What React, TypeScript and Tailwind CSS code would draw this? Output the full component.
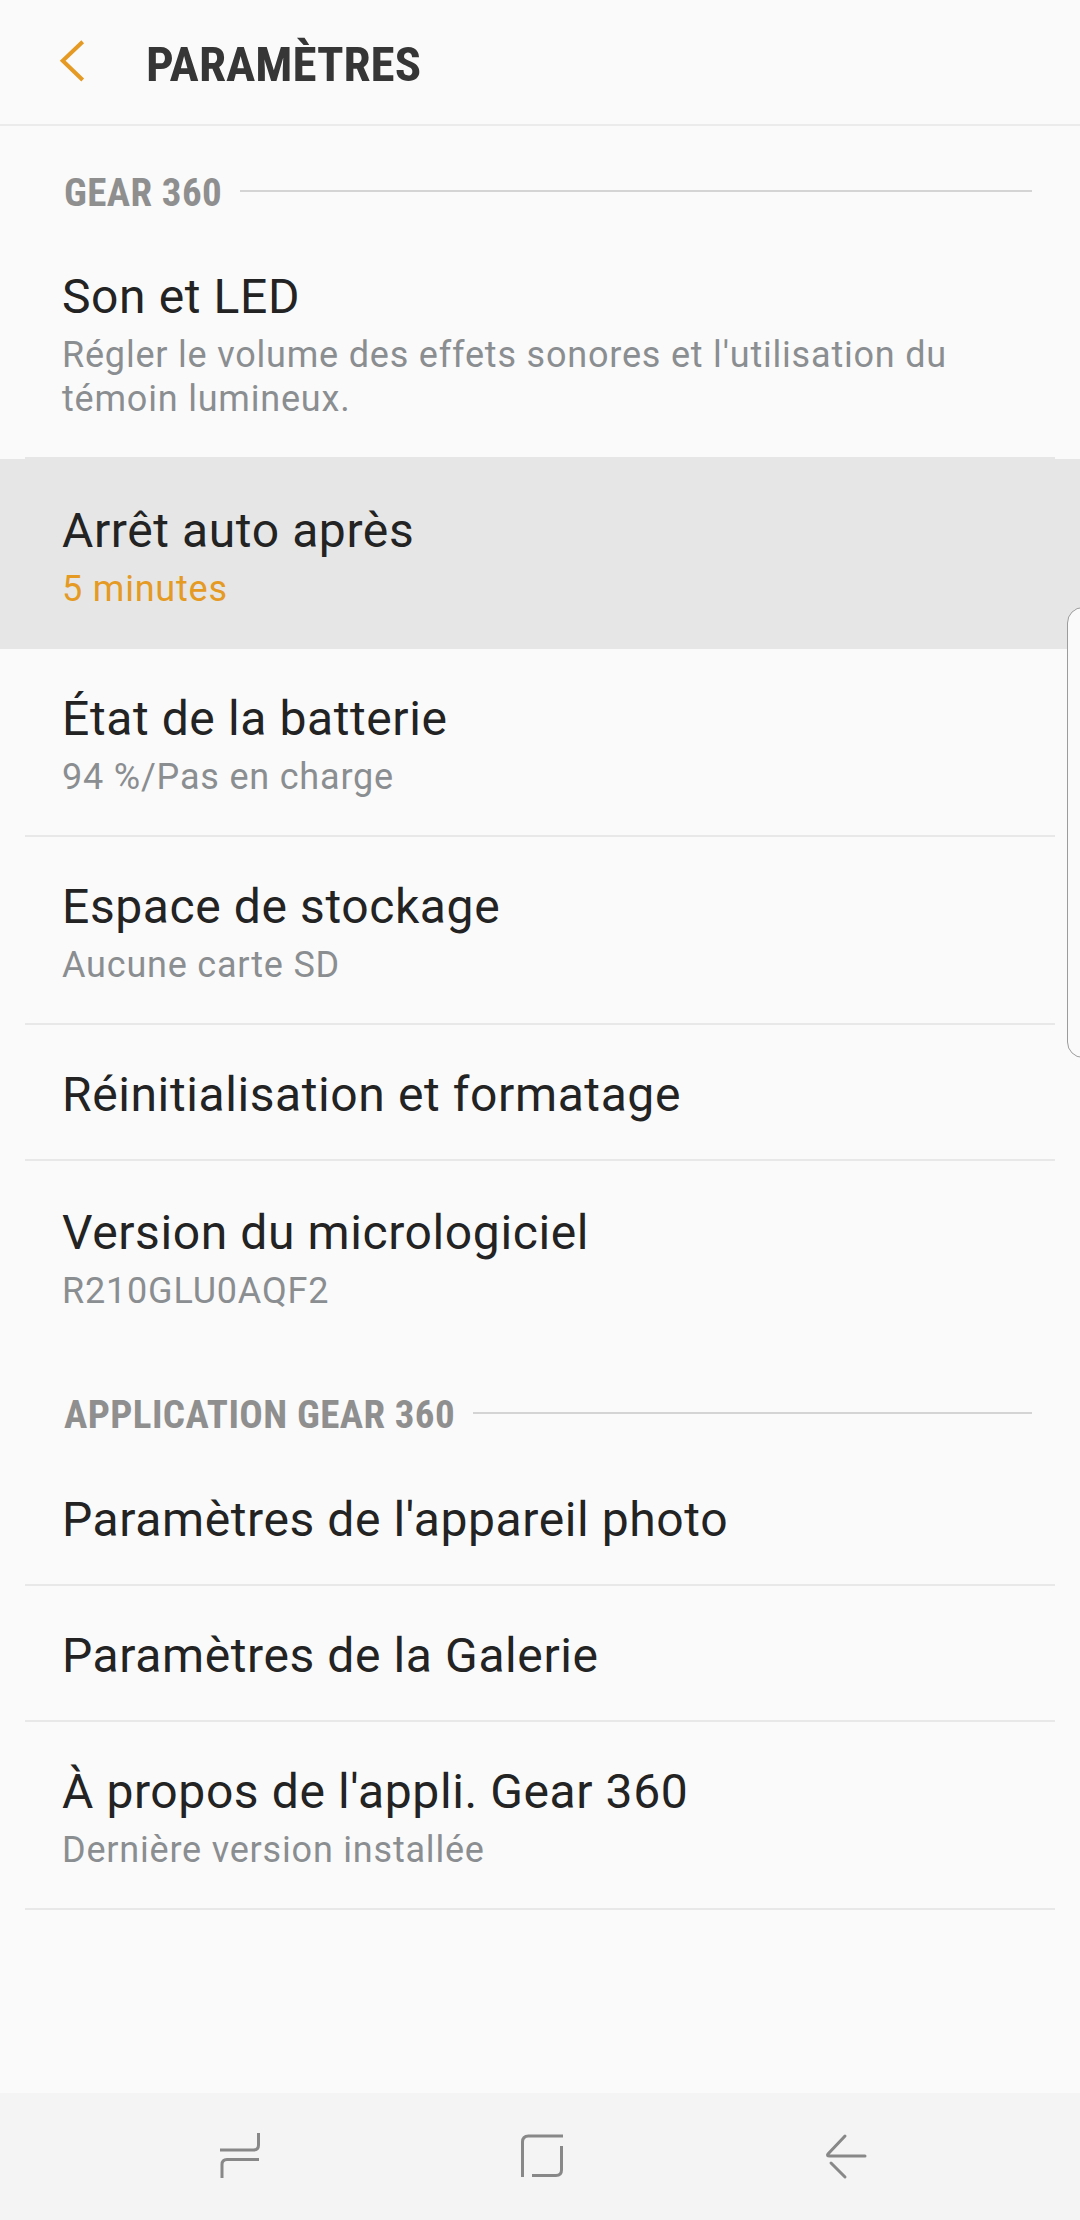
import React from "react";

const condensed = {
  fontFamily: '"Roboto Condensed", "Liberation Sans Narrow", "DejaVu Sans Condensed", Roboto, sans-serif',
};

type Item = {
  title: string;
  sub?: string[];
  accent?: boolean;
  active?: boolean;
};

const gear: Item[] = [
  {
    title: "Son et LED",
    sub: ["Régler le volume des effets sonores et l'utilisation du", "témoin lumineux."],
  },
  { title: "Arrêt auto après", sub: ["5 minutes"], accent: true, active: true },
  { title: "État de la batterie", sub: ["94 %/Pas en charge"] },
  { title: "Espace de stockage", sub: ["Aucune carte SD"] },
  { title: "Réinitialisation et formatage" },
];

const app: Item[] = [
  { title: "Paramètres de l'appareil photo" },
  { title: "Paramètres de la Galerie" },
  { title: "À propos de l'appli. Gear 360", sub: ["Dernière version installée"] },
];

function SectionHeader({ label, height }: { label: string; height: string }) {
  return (
    <div className={`flex items-start pl-[64px] pr-[48px] pt-[44px] ${height}`}>
      <span
        className="text-[39px] leading-[46px] font-bold tracking-[0.4px] text-[#8f8f8f] font-stretch-condensed whitespace-nowrap"
        style={condensed}
      >
        {label}
      </span>
      <div className="ml-[18px] mt-[20px] h-[2px] flex-1 bg-[#d4d4d4]" />
    </div>
  );
}

function Title({ children }: { children: React.ReactNode }) {
  return <div className="text-[48px] leading-[56px] tracking-[0.6px] text-[#232323]">{children}</div>;
}

function Sub({ children, accent }: { children: React.ReactNode; accent?: boolean }) {
  return (
    <div
      className={`mt-[8px] text-[36px] leading-[44px] tracking-[0.8px] ${
        accent ? "text-[#e59a24]" : "text-[#8b8e91]"
      }`}
    >
      {children}
    </div>
  );
}

function Row({ item, first }: { item: Item; first?: boolean }) {
  const divider = item.active || first ? "border-[#e6e6e6]" : "border-[#e8e8e8]";
  const body = (
    <div className={`mx-[25px] border-b-2 ${divider}`}>
      <div className={`pl-[37px] pr-[20px] pb-[36px] ${item.active ? "pt-[44px]" : "pt-[42px]"}`}>
        <Title>{item.title}</Title>
        {item.sub && (
          <Sub accent={item.accent}>
            {item.sub.map((s) => (
              <div key={s}>{s}</div>
            ))}
          </Sub>
        )}
      </div>
    </div>
  );
  if (item.active) return <div className="bg-[#e6e6e6]">{body}</div>;
  return body;
}

export default function App() {
  return (
    <div
      className="relative w-[1080px] h-[2220px] bg-[#fafafa] flex flex-col overflow-hidden"
      style={{ fontFamily: 'Roboto, "Noto Sans", sans-serif' }}
    >
      {/* header */}
      <div className="h-[126px] flex items-start border-b-2 border-[#ebebeb] shrink-0">
        <svg width="60" height="80" viewBox="0 0 60 80" className="ml-[40px] mt-[20px]">
          <path d="M42.7 21.7 L22.7 40.7 L42.7 60" fill="none" stroke="#e59a24" strokeWidth="4" />
        </svg>
        <span
          className="ml-[46px] mt-[36px] text-[49px] leading-[58px] font-bold text-[#363636] font-stretch-condensed"
          style={condensed}
        >
          PARAMÈTRES
        </span>
      </div>

      <div className="flex-1">
        <SectionHeader label="GEAR 360" height="h-[101px]" />
        {gear.map((it, i) => (
          <Row key={it.title} item={it} first={i === 0} />
        ))}
        <div className="mx-[25px] pl-[37px] pt-[44px] pb-[35px]">
          <Title>Version du micrologiciel</Title>
          <Sub>R210GLU0AQF2</Sub>
        </div>
        <SectionHeader label="APPLICATION GEAR 360" height="h-[102px]" />
        {app.map((it) => (
          <Row key={it.title} item={it} />
        ))}
      </div>

      {/* navigation bar */}
      <div className="h-[127px] shrink-0 bg-[#f4f4f4] flex items-start pt-[22px] pl-[200px]">
        <svg width="80" height="80" viewBox="0 0 80 80">
          <g fill="none" stroke="#888" strokeWidth="3">
            <path d="M58.5 18 V30 Q58.5 35 53.5 35 H20" />
            <path d="M59 44.5 H27 Q22 44.5 22 49.5 V63" />
          </g>
        </svg>
        <svg width="80" height="80" viewBox="0 0 80 80" className="ml-[220px]">
          <g fill="none" stroke="#888" strokeWidth="3">
            <path d="M22.5 62 V27 Q22.5 21 28.5 21 H63" />
            <path d="M61.5 31 V55 Q61.5 60.5 56 60.5 H32" />
          </g>
        </svg>
        <svg width="80" height="80" viewBox="0 0 80 80" className="ml-[225px]">
          <g fill="none" stroke="#888" strokeWidth="3" strokeLinecap="round">
            <path d="M40 21 L23 39 Q21.5 41 24.5 41 H60" />
            <path d="M26 48 L40 62" />
          </g>
        </svg>
      </div>

      {/* scroll indicator */}
      <div className="absolute left-[1067px] top-[607px] w-[30px] h-[451px] rounded-l-[16px] border-[1.5px] border-[#9c9c9c] bg-[#fafafa]" />
    </div>
  );
}
